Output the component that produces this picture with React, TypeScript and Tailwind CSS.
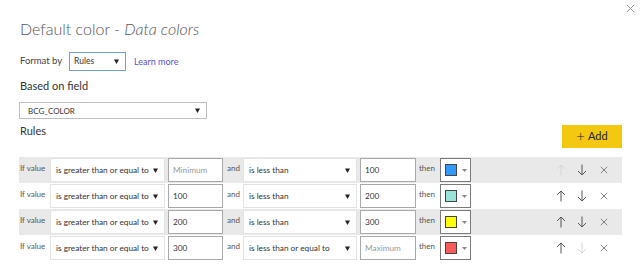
import React from "react";

const F = { fontFamily: 'Lato, "Noto Sans", sans-serif' };

function Caret({ className = "" }: { className?: string }) {
  return (
    <svg width="5" height="5" viewBox="0 0 5 5" className={className}>
      <path d="M0 0.5 L5 0.5 L2.5 5 Z" fill="#222" />
    </svg>
  );
}

function Arrow({ dir, disabled }: { dir: "up" | "down"; disabled?: boolean }) {
  const c = disabled ? "#d6d6d6" : "#555";
  return (
    <svg width="10" height="12" viewBox="0 0 10 12">
      {dir === "up" ? (
        <path d="M5 11.5 V1 M1 5 L5 1 L9 5" stroke={c} strokeWidth="1" fill="none" />
      ) : (
        <path d="M5 0.5 V11 M1 7 L5 11 L9 7" stroke={c} strokeWidth="1" fill="none" />
      )}
    </svg>
  );
}

function Cross({ size = 9, color = "#666" }: { size?: number; color?: string }) {
  return (
    <svg width={size} height={size} viewBox="0 0 10 10">
      <path d="M1 1 L9 9 M9 1 L1 9" stroke={color} strokeWidth="1" fill="none" />
    </svg>
  );
}

type Row = {
  op1: string;
  v1: string;
  ph1?: boolean;
  op2: string;
  v2: string;
  ph2?: boolean;
  color: string;
  upDis?: boolean;
  downDis?: boolean;
  gray: boolean;
};

const rows: Row[] = [
  { op1: "is greater than or equal to", v1: "Minimum", ph1: true, op2: "is less than", v2: "100", color: "#3399ff", upDis: true, gray: true },
  { op1: "is greater than or equal to", v1: "100", op2: "is less than", v2: "200", color: "#99e3d9", gray: false },
  { op1: "is greater than or equal to", v1: "200", op2: "is less than", v2: "300", color: "#ffff00", gray: true },
  { op1: "is greater than or equal to", v1: "300", op2: "is less than or equal to", v2: "Maximum", ph2: true, color: "#ff5a5a", downDis: true, gray: false },
];

export default function App() {
  return (
    <div className="relative w-[640px] h-[270px] bg-white overflow-hidden text-[#333] whitespace-nowrap" style={F}>
      <div className="absolute right-[5px] top-[4px]">
        <Cross size={9} color="#888" />
      </div>
      <div className="pt-[17px] pl-[20px]">
        <div className="text-[16px] leading-[24px] font-light text-[#555]">
          Default color - <span className="italic">Data colors</span>
        </div>
        <div className="mt-[11px] flex items-center h-[19px]">
          <span className="text-[9.5px] text-[#444] w-[49px]">Format by</span>
          <div className="w-[57px] h-[19px] border border-[#6f9fd8] flex items-center justify-between pl-[4px] pr-[6px] text-[8.5px]">
            <span>Rules</span>
            <Caret />
          </div>
          <span className="ml-[8px] text-[9px] text-[#5a4fd8]">Learn more</span>
        </div>
        <div className="mt-[8px] text-[11px] leading-[14px] text-[#333]">Based on field</div>
        <div className="mt-[9px] -ml-[1px] w-[188px] h-[17px] border border-[#bdbdbd] flex items-center justify-between pl-[8px] pr-[6px] text-[8px]">
          <span>BCG_COLOR</span>
          <Caret />
        </div>
      </div>
      <div className="pl-[20px] pr-[18px] flex items-start justify-between mt-[6px]">
        <div className="text-[11px] leading-[14px] -mt-[1px]">Rules</div>
        <div className="w-[60px] h-[23px] bg-[#f2c811] flex items-center justify-center gap-[3px] text-[11px] text-[#222]">
          <span className="text-[15px] font-light leading-none -mt-[1px]">+</span>
          <span>Add</span>
        </div>
      </div>
      <div className="mt-[9px] ml-[19px] w-[603px] flex flex-col">
        {rows.map((r, i) => (
          <div key={i} className={`h-[26px] flex items-center ${r.gray ? "bg-[#e9e9e9]" : "bg-white"}`}>
            <span className="w-[31px] text-[8px] text-[#555] pl-[1px] -mt-[4px]">If value</span>
            <div className="w-[115px] h-[24px] bg-white border border-[#e3e3e3] flex items-center justify-between pl-[5px] pr-[6px] text-[8.25px]">
              <span>{r.op1}</span>
              <Caret />
            </div>
            <div className={`ml-[3px] w-[55px] h-[24px] bg-white border border-[#a8a8a8] flex items-center pl-[4px] text-[8.25px] ${r.ph1 ? "text-[#999]" : ""}`}>
              {r.v1}
            </div>
            <span className="w-[20px] pl-[4px] text-[8px] text-[#555] -mt-[4px]">and</span>
            <div className="w-[114px] h-[24px] bg-white border border-[#e3e3e3] flex items-center justify-between pl-[5px] pr-[6px] text-[8.25px]">
              <span>{r.op2}</span>
              <Caret />
            </div>
            <div className={`ml-[3px] w-[56px] h-[24px] bg-white border border-[#a8a8a8] flex items-center pl-[4px] text-[8.25px] ${r.ph2 ? "text-[#999]" : ""}`}>
              {r.v2}
            </div>
            <span className="w-[24px] pl-[3px] text-[8px] text-[#555] -mt-[4px]">then</span>
            <div className="w-[31px] h-[24px] bg-white border border-[#7a7a7a] flex items-center pl-[4px] gap-[5px]">
              <div className="w-[12px] h-[12px] border border-[#444]" style={{ backgroundColor: r.color }} />
              <svg width="5" height="3" viewBox="0 0 5 3">
                <path d="M0 0 L5 0 L2.5 3 Z" fill="#888" />
              </svg>
            </div>
            <div className="ml-[79px] flex items-center">
              <div className="w-[21px] flex justify-center">
                <Arrow dir="up" disabled={r.upDis} />
              </div>
              <div className="w-[22px] flex justify-center">
                <Arrow dir="down" disabled={r.downDis} />
              </div>
              <div className="w-[22px] flex justify-center">
                <Cross size={8} color="#666" />
              </div>
            </div>
          </div>
        ))}
      </div>
    </div>
  );
}
